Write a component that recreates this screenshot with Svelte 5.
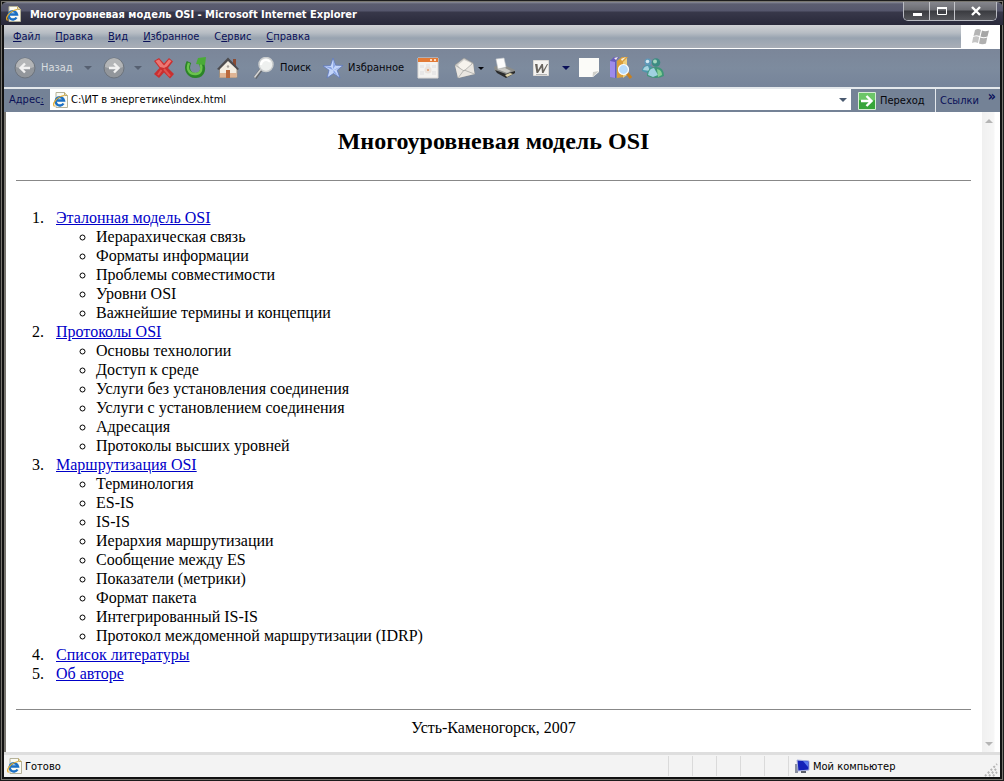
<script lang="ts">
  let address = $state("C:\\ИТ в энергетике\\index.html");

  const menu = [
    ["Ф", "айл"],
    ["П", "равка"],
    ["В", "ид"],
    ["И", "збранное"],
    ["С", "ервис", "е"],
    ["С", "правка"],
  ];

  const chapters = [
    {
      title: "Эталонная модель OSI",
      topics: [
        "Иерарахическая связь",
        "Форматы информации",
        "Проблемы совместимости",
        "Уровни OSI",
        "Важнейшие термины и концепции",
      ],
    },
    {
      title: "Протоколы OSI",
      topics: [
        "Основы технологии",
        "Доступ к среде",
        "Услуги без установления соединения",
        "Услуги с установлением соединения",
        "Адресация",
        "Протоколы высших уровней",
      ],
    },
    {
      title: "Маршрутизация OSI",
      topics: [
        "Терминология",
        "ES-IS",
        "IS-IS",
        "Иерархия маршрутизации",
        "Сообщение между ES",
        "Показатели (метрики)",
        "Формат пакета",
        "Интегрированный IS-IS",
        "Протокол междоменной маршрутизации (IDRP)",
      ],
    },
    { title: "Список литературы", topics: [] },
    { title: "Об авторе", topics: [] },
  ];
</script>

{#snippet pageIcon()}
  <svg class="page-icon" viewBox="0 0 16 16" aria-hidden="true">
    <path d="M3 .5h8.500l3 3v12H3z" fill="#fbfaf2" stroke="#b5b29a" />
    <path d="M11.500.5v3h3" fill="#e8d9a0" stroke="#c0a868" />
    <path d="M10.500 11.500A4.200 4.200 0 1 1 11 8.500H4" fill="none" stroke="#1b6fc4" stroke-width="2.400" />
    <path d="M1.500 14.500C-1 12 3 5 11 3.500" fill="none" stroke="#e5ab2c" stroke-width="1.200" />
  </svg>
{/snippet}

{#snippet caret()}
  <svg class="caret" viewBox="0 0 8 4" aria-hidden="true"><path d="M0 0h8L4 4z" fill="currentColor" /></svg>
{/snippet}

<div class="window">
  <header class="titlebar">
    {@render pageIcon()}
    <span class="title">Многоуровневая модель OSI - Microsoft Internet Explorer</span>
    <div class="controls">
      <button aria-label="Свернуть">
        <svg viewBox="0 0 14 12"><path d="M3 9.500h9" stroke="#fff" stroke-width="3" /></svg>
      </button>
      <button aria-label="Развернуть">
        <svg viewBox="0 0 14 12"><path d="M2.500 2.500h9v7h-9z" fill="none" stroke="#fff" /><path d="M2 3h10" stroke="#fff" stroke-width="2" /></svg>
      </button>
      <button class="close" aria-label="Закрыть">
        <svg viewBox="0 0 14 12"><path d="M3 2l8 8M11 2l-8 8" stroke="#fff" stroke-width="2.400" /></svg>
      </button>
    </div>
  </header>

  <nav class="menubar">
    {#each menu as [key, rest, inner]}
      <button>
        {#if inner}{key}<u>{inner}</u>{rest.slice(1)}{:else}<u>{key}</u>{rest}{/if}
      </button>
    {/each}
    <div class="flag">
      <svg viewBox="0 0 20 18" aria-hidden="true">
        <path d="M4 2q3-2 6 0L8.500 8q-3-1.500-6 0z" fill="#b4b4b4" />
        <path d="M11 2.500q3 1.500 7 0L16.500 8.500q-4 1.500-7 0z" fill="#a6a6a6" />
        <path d="M2.200 9q3-1.500 6 0L7 15q-3-1.500-6 0z" fill="#c4c4c4" />
        <path d="M9.200 9.500q3.500 1.500 7 0L15 15.500q-3.500 1.500-7 0z" fill="#b0b0b0" />
      </svg>
    </div>
  </nav>

  <div class="toolbar">
    <button class="back" disabled>
      <svg class="icon" viewBox="0 0 22 22">
        <circle cx="11" cy="11" r="10" fill="#92969b" stroke="#6d747d" />
        <path d="M2 10a9 9 0 0 1 18 0q-9 4-18 0z" fill="#b3b5b7" />
        <path d="M11 6.500L6.500 11l4.500 4.500M7 11h9" fill="none" stroke="#f1f1f1" stroke-width="2.400" />
      </svg>
      Назад
    </button>
    <button class="drop dim" disabled aria-label="Список назад">{@render caret()}</button>
    <button disabled aria-label="Вперед">
      <svg class="icon" viewBox="0 0 22 22">
        <circle cx="11" cy="11" r="10" fill="#92969b" stroke="#6d747d" />
        <path d="M2 10a9 9 0 0 1 18 0q-9 4-18 0z" fill="#b3b5b7" />
        <path d="M11 6.500l4.500 4.500-4.500 4.500M15 11H6" fill="none" stroke="#f1f1f1" stroke-width="2.400" />
      </svg>
    </button>
    <button class="drop dim" disabled aria-label="Список вперед">{@render caret()}</button>
    <button aria-label="Остановить">
      <svg class="icon" viewBox="0 0 22 22">
        <path d="M1 4l5-3 5 5.500L16 1l4 3.500-5 6.500 6 6-4 4.500-6-6L6 21l-5-4 5.500-6z" fill="#c92f30" />
        <path d="M2.500 4L6 2.500l5 6 5-6L18.500 4 14 9.500l-3 1.500-4-1z" fill="#ec7773" />
        <path d="M11 12l6 7M8.500 13L5 18" stroke="#e05350" stroke-width="2" />
      </svg>
    </button>
    <button aria-label="Обновить">
      <svg class="icon" viewBox="0 0 22 22">
        <path d="M4 5C0 13 5 19 11 18.500 18 18 19 11 16 6" fill="none" stroke="#2b8526" stroke-width="5" />
        <path d="M4 6C1 13 5 17.500 11 17c5.500-.5 6.500-6 4.500-10" fill="none" stroke="#6bc34d" stroke-width="2.400" />
        <path d="M11 7l2-6 8-1-1 8z" fill="#4aab37" />
      </svg>
    </button>
    <button aria-label="Домой">
      <svg class="icon" viewBox="0 0 22 22">
        <path d="M16 2h3v7h-3z" fill="#8c4a32" />
        <path d="M2.500 11L11 3l9 8v9.500H2.500z" fill="#f3ede2" stroke="#9d8e7e" />
        <path d="M0 12L11 .5 22 12l-1.500 1L11 4l-9 9z" fill="#4d4b4e" />
        <path d="M9 13h4v8H9z" fill="#b9683c" />
        <path d="M3 16h6v4.500H3zM13 16h6.500v4.500H13z" fill="#dfb494" />
        <circle cx="11" cy="9.500" r="1.200" fill="#aaa49e" />
      </svg>
    </button>
    <button class="search">
      <svg class="icon" viewBox="0 0 22 22">
        <path d="M2 21l6.500-9" stroke="#62676d" stroke-width="3.400" />
        <path d="M1.500 20.500L8 12" stroke="#d3d3d3" stroke-width="1.600" />
        <circle cx="13" cy="7.500" r="7" fill="#eef0ef" stroke="#c9cccd" stroke-width="1.500" />
        <path d="M8 8a5 5 0 0 1 9-3" fill="none" stroke="#fff" stroke-width="2" />
      </svg>
      Поиск
    </button>
    <button class="favorites">
      <svg class="icon" viewBox="0 0 22 22">
        <path d="M10 1l2.600 7.200L20 8.500l-5.800 4.800L17 21l-6.500-4.500L4 21l2-7.800L0 9l7.500-.5z" fill="#c4d5fa" stroke="#5e79bd" stroke-width=".8" />
        <path d="M10.500 3l1.500 6-2 3zM2 9.500l6 .5 2 3zM10.500 13l5 6-5-3.500zM18 9.500l-5 3-2.500.5z" fill="#86a2e4" />
      </svg>
      Избранное
    </button>
    <button aria-label="Журнал">
      <svg class="icon" viewBox="0 0 22 22">
        <path d="M1 1h20v20H1z" fill="#f3f2f0" stroke="#dcd9d6" />
        <path d="M1 1h20v4H1z" fill="#e37a35" />
        <path d="M13 2h2v2h-2zM17 2h2v2h-2z" fill="#ffd9bd" />
        <path d="M3 8h4v3H3zM9 7h4v3H9zM15 8h4v3h-4zM3 14h4v4H3zM15 14h4v4h-4z" fill="#e8e7e7" />
        <circle cx="11" cy="13" r="3.500" fill="#eae2dc" />
        <path d="M10 12h2v2h-2z" fill="#e2ae8c" />
      </svg>
    </button>
    <button class="mail spaced" aria-label="Почта">
      <svg class="icon" viewBox="0 0 22 22">
        <path d="M1 8l9-7 9 5 1.500 11L4 21z" fill="#cfcecb" stroke="#8f8e8c" stroke-width=".6" />
        <path d="M4 8l6-5 7 3v7l-9 1z" fill="#f6f3ed" />
        <path d="M1 8l9 6 9-8 1.500 11L4 21z" fill="#e9e6e1" />
        <path d="M4 21l6-8 10.500 4M1 8l9 6 9-8" fill="none" stroke="#aaa9a7" stroke-width=".8" />
      </svg>
      {@render caret()}
    </button>
    <button aria-label="Печать">
      <svg class="icon" viewBox="0 0 22 22">
        <path d="M1 10l2-1 8-1 11 5v3l-9 5-11-7z" fill="#8d8e8b" />
        <path d="M3 2l8-1 2 9-8 2z" fill="#fcfcfc" stroke="#c2c6ca" stroke-width=".6" />
        <path d="M4 12l8-1 6 3-4 2z" fill="#c9c9c5" />
        <path d="M2 13l11 4 9-3v2l-9 5-9-5z" fill="#292a2b" />
        <path d="M12 18l5-2 3 1-6 3z" fill="#dfd4ab" />
      </svg>
    </button>
    <button class="spaced" aria-label="Править в Word">
      <svg class="icon" viewBox="0 0 22 22">
        <path d="M3.500 3.500h15v15h-15z" fill="#f4f3f1" stroke="#dad8d5" />
        <path d="M5 7h2.500l.5 6 3.500-6H13l.5 6L17 7h1l-4.500 9H12l-.5-5.500L8 16H6.500z" fill="#68645e" />
        <path d="M6 17.500h11" stroke="#b5b5b5" />
      </svg>
    </button>
    <button class="drop navy" aria-label="Редакторы">{@render caret()}</button>
    <button aria-label="Обсуждение">
      <svg class="icon" viewBox="0 0 22 22">
        <path d="M1 1h20v14l-6 5H1z" fill="#fbfbf8" />
        <path d="M14.500 20l.5-5 6-1z" fill="#cfcfca" />
      </svg>
    </button>
    <button aria-label="Справочные материалы">
      <svg class="icon" viewBox="0 0 22 22">
        <path d="M0 4l4-4h5L6 4v17l-6-1z" fill="#6559bd" />
        <path d="M0 4l5 1v16l-5-1z" fill="#9d8bea" />
        <path d="M7 4l5-4h6l-4 5v15l-7 1z" fill="#d99f3c" />
        <path d="M4 1l4-1-2 3zM11 2l5-2-4 4z" fill="#f6f2e6" />
        <path d="M13 5l4-4v17l-4 3z" fill="#efcf7c" />
        <path d="M17 16l4 5" stroke="#c7801f" stroke-width="3" />
        <circle cx="13.500" cy="12.500" r="5" fill="#b8dcfb" stroke="#fbfbfa" stroke-width="1.200" />
      </svg>
    </button>
    <button aria-label="Messenger">
      <svg class="icon" viewBox="0 0 22 22">
        <circle cx="6" cy="5" r="3.500" fill="#5f9aba" />
        <circle cx="5.500" cy="4.500" r="1.800" fill="#d2e8f2" />
        <path d="M0 14q0-6 6-6 5 0 5 6l-3 3z" fill="#4e96ab" />
        <path d="M1 13q1-4 5-4l2 5z" fill="#a8d3de" />
        <circle cx="14" cy="5.500" r="4.300" fill="#3c8b83" />
        <circle cx="13" cy="4.500" r="2" fill="#a3d6bd" />
        <path d="M5 19q0-9 9-9 8 0 8 9-8 4-17 0z" fill="#3f9678" />
        <path d="M6 18q1-7 6-7l4 7-5 2z" fill="#a0d2e0" />
        <path d="M15 12q5 1 5 6l-4 2z" fill="#87cf94" />
      </svg>
    </button>
  </div>

  <form class="addressbar" onsubmit={(e) => e.preventDefault()}>
    <label for="address">Адрес<u>:</u></label>
    <div class="field">
      {@render pageIcon()}
      <input id="address" type="text" bind:value={address} />
      <button class="drop" type="button" aria-label="История адресов">{@render caret()}</button>
    </div>
    <button class="go" type="submit">
      <svg viewBox="0 0 18 18" aria-hidden="true">
        <path d="M.5.5h17v17H.5z" fill="#37a43a" stroke="#d4edd3" />
        <path d="M1 1h16v7q-8 3-16 0z" fill="#6cc668" />
        <path d="M3 9h10M8.500 4l5 5-5 5" fill="none" stroke="#fff" stroke-width="2.400" />
      </svg>
      Переход
    </button>
    <button class="links" type="button">Ссылки <span class="more">»</span></button>
  </form>

  <div class="viewport">
    <main>
      <h1>Многоуровневая модель OSI</h1>
      <hr />
      <ol>
        {#each chapters as chapter}
          <li>
            <a href="#top">{chapter.title}</a>
            {#if chapter.topics.length}
              <ul>
                {#each chapter.topics as topic}
                  <li>{topic}</li>
                {/each}
              </ul>
            {/if}
          </li>
        {/each}
      </ol>
      <hr />
      <p>Усть-Каменогорск, 2007</p>
    </main>
    <div class="scrollbar">
      <button class="up" aria-label="Вверх">{@render caret()}</button>
      <button aria-label="Вниз">{@render caret()}</button>
    </div>
  </div>

  <footer class="statusbar">
    {@render pageIcon()}
    <span class="status">Готово</span>
    {#each Array(5) as _}
      <span class="cell"></span>
    {/each}
    <span class="zone">
      <svg viewBox="0 0 16 16" aria-hidden="true">
        <path d="M1 5h3v9H1z" fill="#8a90a0" />
        <path d="M3 1l12 1v9L4 12z" fill="#1420b8" stroke="#a9b2dd" />
        <path d="M9 2l5 .5V8z" fill="#5b7bf0" />
        <path d="M7 12h5v2H7z" fill="#5b606c" />
      </svg>
      Мой компьютер
    </span>
    <svg class="grip" viewBox="0 0 14 14" aria-hidden="true">
      <path d="M1 13L13 1M5 13l8-8M9 13l4-4" stroke="#b4b4b4" stroke-width="2" stroke-dasharray="2 2" />
    </svg>
  </footer>
</div>

<style>
  :global(body) {
    margin: 0;
    background: #000;
  }
  .window {
    display: flex;
    flex-direction: column;
    box-sizing: border-box;
    min-height: 100vh;
    padding: 2px 4px 4px;
    background: #111;
    box-shadow: inset 0 0 0 1px #1c1c1c, inset 0 0 0 2px #77756f;
    font-family: "DejaVu Sans Condensed", "DejaVu Sans", Tahoma, sans-serif;
    font-size: 11px;
    line-height: 14px;
  }
  button {
    display: flex;
    align-items: center;
    padding: 0;
    border: 0;
    background: none;
    color: inherit;
    font: inherit;
    white-space: nowrap;
  }
  .page-icon {
    width: 16px;
    height: 16px;
    flex: none;
  }
  .caret {
    width: 8px;
    height: 4px;
    flex: none;
  }

  .titlebar {
    display: flex;
    align-items: center;
    height: 23px;
    margin: 0 -3px;
    padding: 0 6px 0 5px;
    border-radius: 6px 6px 0 0;
    background: linear-gradient(#8b8d99 0, #5b5d70 2px, #55566c 9px, #38384a 10px, #29293a 100%);
    color: #fff;
  }
  .title {
    flex: 1;
    margin-left: 8px;
    padding-top: 3px;
    font-weight: bold;
  }
  .controls {
    display: flex;
    align-self: flex-start;
    height: 18px;
    border: 1px solid #b9bbc2;
    border-top: 0;
    border-radius: 0 0 5px 5px;
    overflow: hidden;
  }
  .controls button {
    justify-content: center;
    width: 25px;
    background: linear-gradient(#85868d, #6c6d73 8px, #3a3b40 9px, #55565b);
  }
  .controls button + button {
    border-left: 1px solid #c4c5ca;
  }
  .controls .close {
    width: 42px;
  }
  .controls svg {
    width: 14px;
    height: 12px;
  }

  .menubar {
    display: flex;
    gap: 15px;
    height: 23px;
    padding-left: 9px;
    border-bottom: 1px solid #fff;
    background: linear-gradient(#d0d2d5 0, #b6bcc3 8px, #98a3b0 13px, #a9aeb7 100%);
    color: #0a1058;
  }
  .flag {
    display: flex;
    align-items: center;
    justify-content: center;
    width: 39px;
    margin-left: auto;
    background: #fff;
  }
  .flag svg {
    width: 20px;
    height: 18px;
  }

  .toolbar {
    display: flex;
    height: 38px;
    padding-left: 5px;
    border-bottom: 2px solid #e4e8ec;
    background: linear-gradient(#7b8699, #7d8b9e 50%, #76849a);
    color: #05060c;
  }
  .toolbar button {
    width: 32px;
    padding-left: 5px;
  }
  .icon {
    width: 22px;
    height: 22px;
    flex: none;
  }
  .toolbar .back {
    width: 71px;
    gap: 5px;
    color: #d9dcdf;
  }
  .toolbar .search {
    width: 74px;
    gap: 5px;
    padding-left: 9px;
  }
  .toolbar .favorites {
    width: 94px;
    gap: 3px;
  }
  .toolbar .mail {
    width: 39px;
    gap: 2px;
  }
  .mail .caret {
    width: 6px;
    height: 3px;
  }
  .toolbar .drop {
    width: 16px;
  }
  .toolbar .dim {
    width: 18px;
    padding-left: 4px;
    color: #566071;
  }
  .navy {
    color: #0a1058;
  }
  .toolbar .spaced {
    margin-left: 5px;
  }

  .addressbar {
    display: flex;
    height: 23px;
    padding-left: 5px;
    background: #748296;
    color: #05060c;
  }
  .addressbar label {
    width: 41px;
    line-height: 22px;
    color: #0a1058;
  }
  .field {
    display: flex;
    flex: 1;
    align-items: center;
    height: 21px;
    padding: 0 4px 0 3px;
    background: #fff;
  }
  .field input {
    flex: 1;
    min-width: 0;
    margin-left: 2px;
    padding: 0;
    border: 0;
    outline: 0;
    font: inherit;
  }
  .field .drop {
    color: #4a5a70;
  }
  .go {
    gap: 4px;
    width: 84px;
    padding-left: 7px;
  }
  .go svg {
    width: 18px;
    height: 18px;
  }
  .links {
    width: 65px;
    padding-left: 4px;
    border-left: 1px solid #e4e8ec;
    color: #0a1058;
  }
  .more {
    align-self: flex-start;
    margin-left: auto;
    padding-right: 4px;
    font-size: 14px;
    font-weight: bold;
  }

  .viewport {
    display: flex;
    flex: 1;
    border-left: 2px solid #77756f;
    background: #fff;
  }
  main {
    flex: 1;
    padding: 15px 11px 0 10px;
    font-family: "Liberation Serif", "Times New Roman", serif;
    font-size: 16px;
    line-height: 19px;
  }
  h1 {
    margin: 0 0 25px;
    font-size: 24px;
    line-height: 28px;
    text-align: center;
  }
  hr {
    height: 1px;
    margin: 0;
    border: 0;
    background: #888;
  }
  ol {
    margin: 27px 0 26px;
    padding-left: 40px;
  }
  ol > li::marker {
    content: counter(list-item) ".\00a0\00a0\00a0";
  }
  ul {
    margin: 0;
    padding-left: 40px;
    list-style: circle;
  }
  ul > li::marker {
    content: normal;
  }
  a {
    color: #0000c8;
  }
  p {
    margin: 8px 0 0;
    text-align: center;
  }
  .scrollbar {
    display: flex;
    flex-direction: column;
    justify-content: space-between;
    width: 18px;
    background: linear-gradient(90deg, #f0f0f0, #f6f6f6 12px, #fff 13px);
    color: #b5b5b5;
  }
  .scrollbar button {
    width: 14px;
    height: 17px;
    justify-content: center;
  }
  .up svg {
    transform: rotate(180deg);
  }

  .statusbar {
    display: flex;
    align-items: center;
    height: 22px;
    padding-left: 3px;
    border-top: 3px solid #dedede;
    background: #f3f3f3;
  }
  .status {
    flex: 1;
    margin-left: 2px;
    padding-top: 2px;
  }
  .cell,
  .zone {
    box-sizing: border-box;
    width: 24px;
    height: 20px;
    border-left: 1px solid #dadada;
  }
  .zone {
    display: flex;
    align-items: center;
    gap: 3px;
    width: 196px;
    padding: 2px 0 0 5px;
  }
  .zone svg {
    width: 16px;
    height: 16px;
  }
  .grip {
    align-self: flex-end;
    width: 14px;
    height: 14px;
    margin-right: 2px;
  }
</style>
